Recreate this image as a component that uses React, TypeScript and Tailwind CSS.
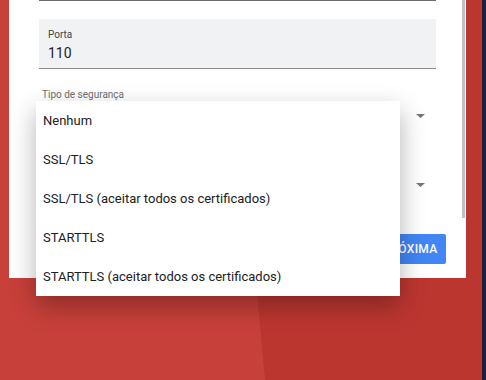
import React from 'react';

const options = [
  'Nenhum',
  'SSL/TLS',
  'SSL/TLS (aceitar todos os certificados)',
  'STARTTLS',
  'STARTTLS (aceitar todos os certificados)',
];

const Arrow = () => (
  <svg width="9" height="4" viewBox="0 0 9 4" className="block">
    <path d="M0 0 L9 0 L4.5 4 Z" fill="#757575" />
  </svg>
);

export default function App() {
  return (
    <div
      className="relative w-[486px] h-[380px] overflow-hidden bg-[#c8403a]"
      style={{ fontFamily: 'Roboto, "Liberation Sans", sans-serif' }}
    >
      {/* wallpaper */}
      <svg className="absolute inset-0" width="486" height="380">
        <polygon points="230,0 482,0 482,380 265,380" fill="#bc3630" />
        <rect x="482" y="0" width="4" height="380" fill="#1f2033" />
      </svg>

      {/* dialog panel */}
      <div className="relative ml-[9px] w-[457px] h-[278px] bg-white">
        <div className="absolute right-[1px] top-0 w-[3px] h-[218px] bg-[#c1c1c1]" />

        <div className="ml-[30px] w-[397px] h-px bg-[#6b6b6b]" />

        <div className="mt-[18px] ml-[30px] w-[397px] h-[50px] bg-[#f1f2f4] border-b border-[#8a8a8a] pl-[9px] pt-[10px]">
          <div className="text-[10px] leading-[12px] text-[#444]">Porta</div>
          <div className="mt-[3px] text-[14px] leading-[18px] text-[#222]">110</div>
        </div>

        <div className="mt-[20px] ml-[33px] text-[10px] leading-[12px] text-[#6e6e6e]">Tipo de segurança</div>

        <div className="mt-[13px] ml-[407px]">
          <Arrow />
        </div>
        <div className="mt-[65px] ml-[407px]">
          <Arrow />
        </div>

        <div className="mt-[47px] ml-[365px] w-[72px] h-[30px] rounded-[2px] bg-[#4285f4] flex items-center justify-center text-white text-[12px] font-medium tracking-[0.3px]">
          PRÓXIMA
        </div>
      </div>

      {/* open select menu */}
      <div className="absolute left-[36px] top-[101px] w-[364px] bg-white shadow-[0_10px_24px_rgba(0,0,0,0.3)]">
        {options.map((o) => (
          <div key={o} className="h-[39px] flex items-center pl-[7px] text-[13px] text-[#202124]">
            {o}
          </div>
        ))}
      </div>
    </div>
  );
}
